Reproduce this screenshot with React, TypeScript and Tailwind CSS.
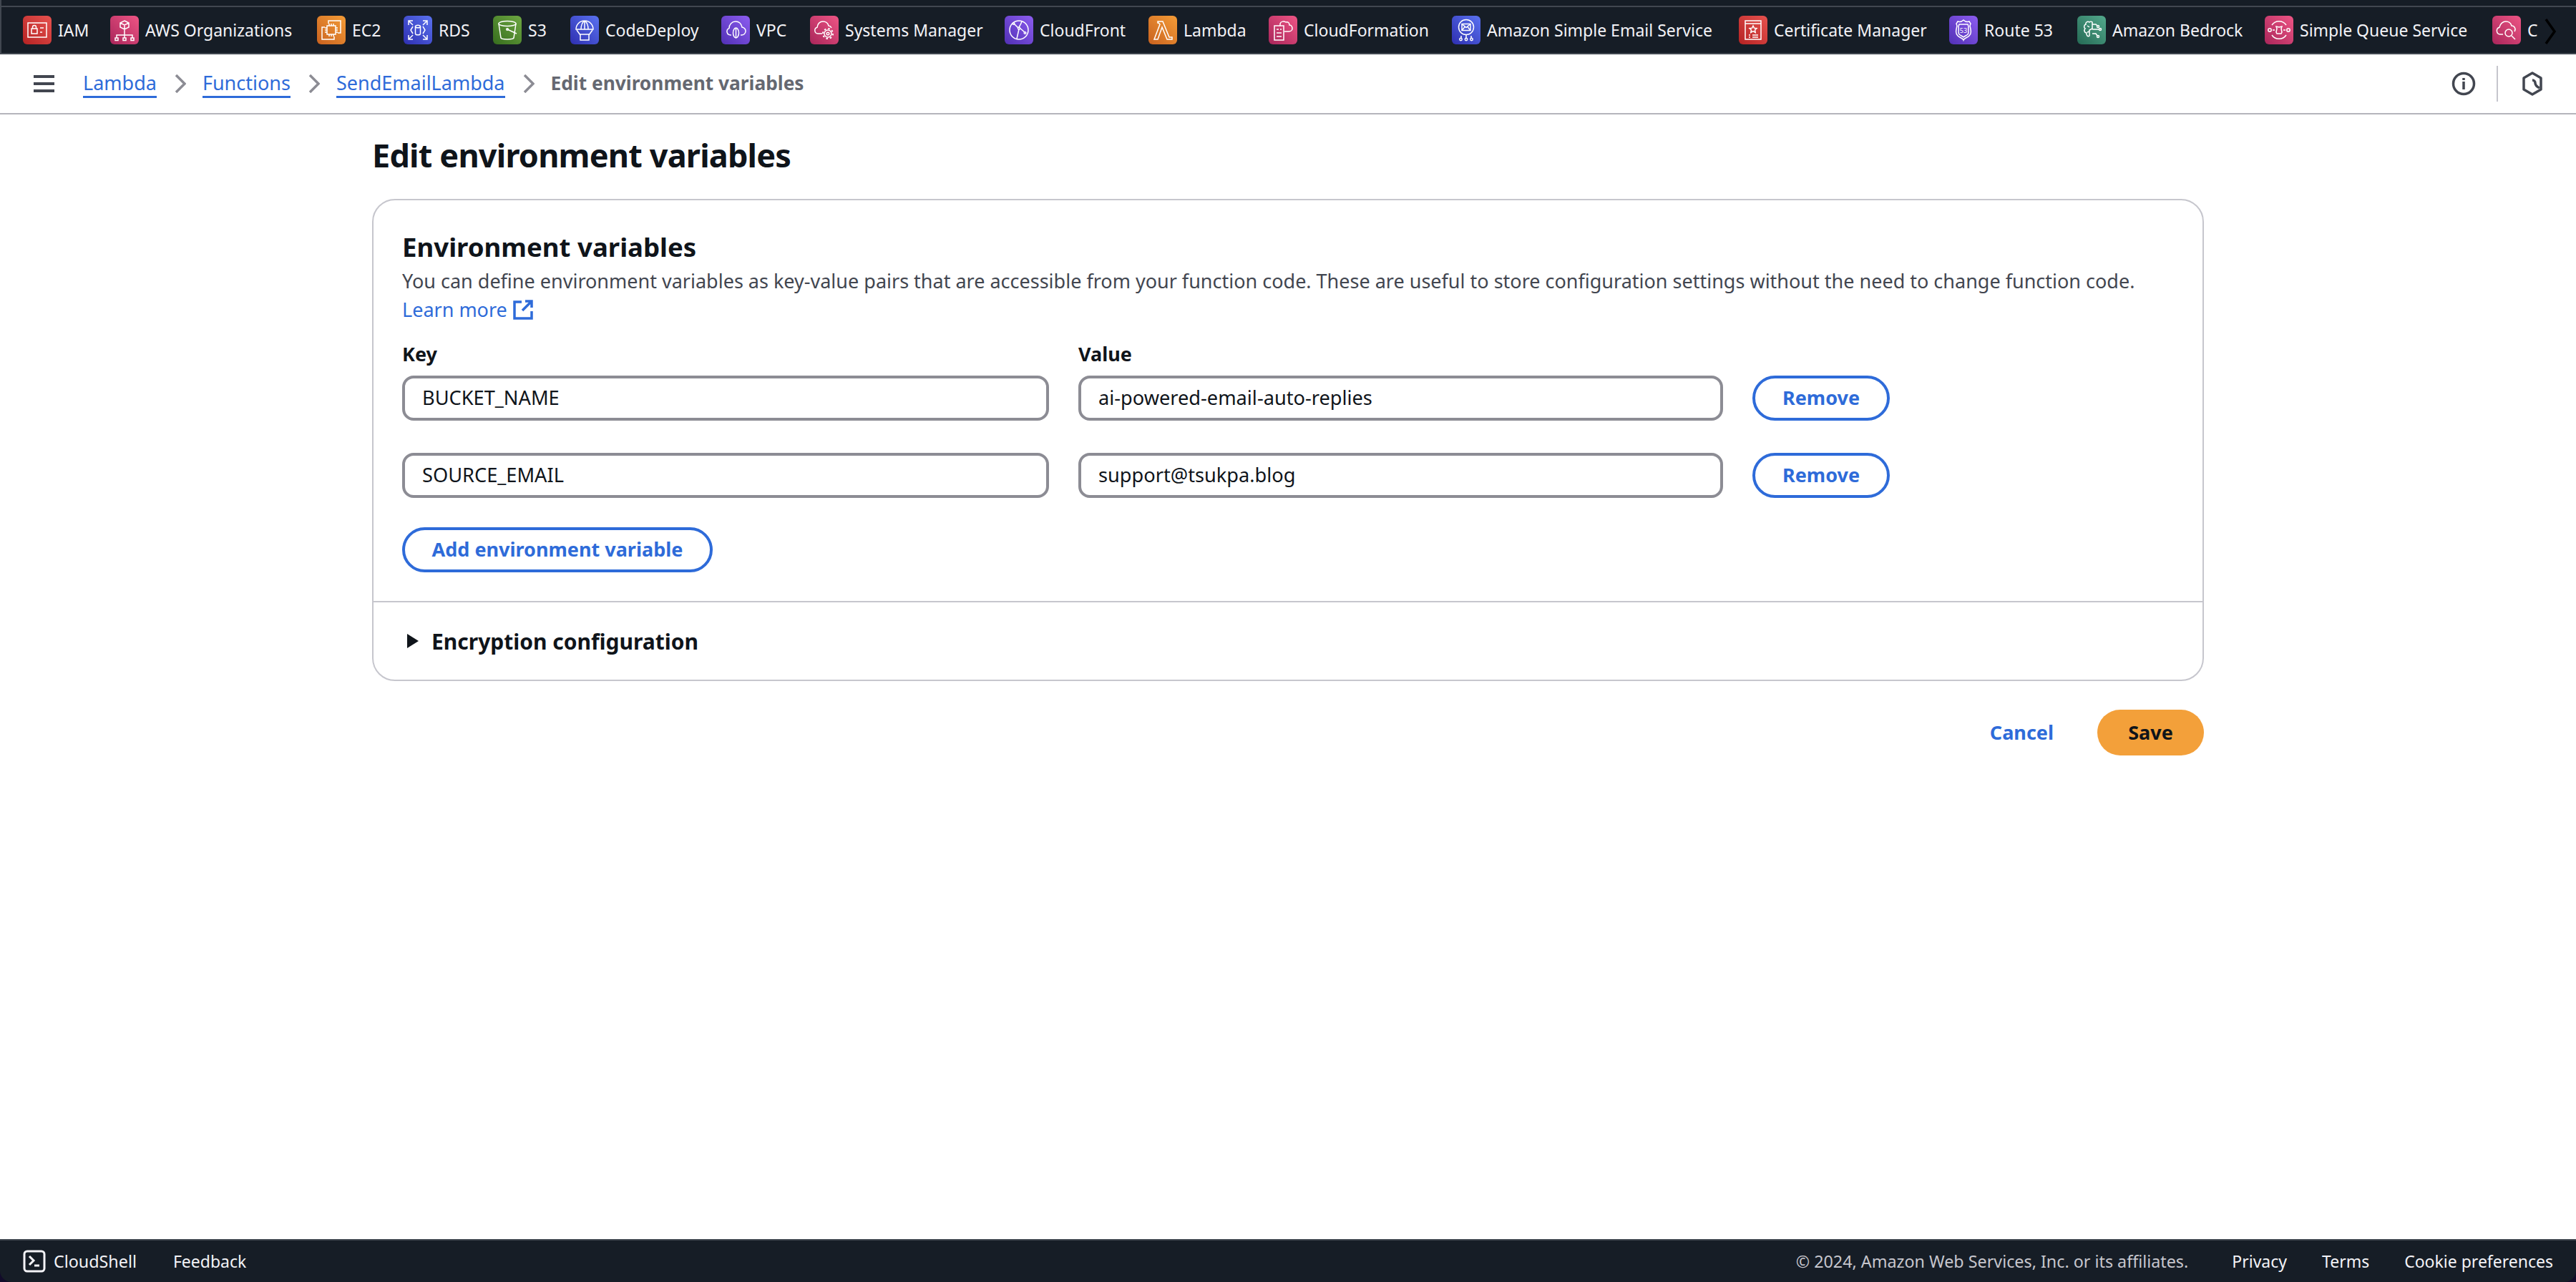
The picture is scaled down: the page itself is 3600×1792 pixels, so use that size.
import React from "react";

const font = "font-['Noto_Sans','Liberation_Sans',sans-serif]";

type Service = { name: string; step: number; from: string; to: string; icon: React.ReactNode };

const s = { fill: "none", stroke: "white", strokeWidth: 1.5 };

const services: Service[] = [
  { name: "IAM", step: 122, from: "#e7524f", to: "#b52323", icon: <g {...s}><rect x="7" y="10" width="26" height="20" /><rect x="12" y="18" width="8" height="7" /><path d="M13.5 18v-2a2.500 2.500 0 0 1 5 0v2M24 17h5M24 23h3" /></g> },
  { name: "AWS Organizations", step: 289, from: "#ee5585", to: "#a9265a", icon: <g {...s}><path d="M20 7l6 3v6l-6 3-6-3v-6zM14 10l6 3 6-3M20 13v6M20 19v7M9 31v-4h22v4M20 26v5" /><rect x="7" y="31" width="4" height="3.500" /><rect x="18" y="31" width="4" height="3.500" /><rect x="29" y="31" width="4" height="3.500" /></g> },
  { name: "EC2", step: 121, from: "#f49c37", to: "#c9621f", icon: <g {...s}><rect x="14" y="14" width="12" height="12" /><path d="M17 14v-3M20 14v-3M23 14v-3M17 29v-3M20 29v-3M23 29v-3M14 17h-3M14 20h-3M14 23h-3M26 17h3M26 20h3M26 23h3" /><path d="M16 11V7h17v17h-4M11 16H7v17h17v-4" /></g> },
  { name: "RDS", step: 125, from: "#5a72f0", to: "#2e2fb0", icon: <g {...s}><ellipse cx="20" cy="15" rx="3.500" ry="1.800" /><path d="M16.500 15v10c0 2.400 7 2.400 7 0V15M13 15l-3 5 3 5M27 15l3 5-3 5M7 13V7h6M33 13V7h-6M7 27v6h6M33 27v6h-6M8 8l5 5M32 8l-5 5M8 32l5-5M32 32l-5-5" /></g> },
  { name: "S3", step: 108, from: "#6ea842", to: "#376d1e", icon: <g {...s}><ellipse cx="20" cy="11" rx="12" ry="3.500" /><path d="M8 11l3 20c.5 2.500 17.500 2.500 18 0l3-20M20 19l13 6" /><circle cx="20" cy="19" r="1.300" /></g> },
  { name: "CodeDeploy", step: 211, from: "#5a72f0", to: "#2e2fb0", icon: <g {...s}><path d="M8 19a12 12 0 0 1 24 0zM15 19c0-6 2-10 5-12 3 2 5 6 5 12M20 7v12M9 20l5 7M31 20l-5 7" /><rect x="14" y="26" width="12" height="8" /></g> },
  { name: "VPC", step: 124, from: "#8d5df0", to: "#5130b5", icon: <g {...s}><path d="M14 27h-1a5 5 0 0 1-2-9.600C11 12 15 8 20 8s8 3.500 9 8a5.500 5.500 0 0 1-1 11h-1" /><ellipse cx="20.500" cy="24" rx="4" ry="7" /><path d="M20.500 17v14" /></g> },
  { name: "Systems Manager", step: 272, from: "#ee5585", to: "#a9265a", icon: <g {...s}><path d="M17 25h-6a4.500 4.500 0 0 1-1-8.800C10.500 11 14 8 18 8c4 0 7 2.500 8 6a5 5 0 0 1 4 3" /><circle cx="25" cy="25" r="5" /><circle cx="25" cy="25" r="7" strokeWidth="2" strokeDasharray="2.500 3" /><circle cx="25" cy="25" r="1.800" /></g> },
  { name: "CloudFront", step: 201, from: "#8d5df0", to: "#5130b5", icon: <g {...s}><circle cx="20" cy="20" r="13" /><path d="M13 11l6 6M21 17l7 6M24 8c-1 3-2 5-4 8M20 19l-3 13" /><circle cx="20" cy="17.500" r="1.500" /><circle cx="28.500" cy="24" r="1.300" /><circle cx="12.500" cy="11" r="1.300" /></g> },
  { name: "Lambda", step: 168, from: "#f49c37", to: "#c9621f", icon: <g {...s}><path d="M13 8h7l9 22h4v3h-7l-7-17-6 17H8l8-21-2-2h-1z" /></g> },
  { name: "CloudFormation", step: 256, from: "#ee5585", to: "#a9265a", icon: <g {...s}><rect x="8" y="14" width="13" height="20" /><path d="M11 19h3M16 19h2M11 24h7M11 29h7M16 14v-3c1-3 5-4 8-2 3-1 5 1 5 4 3 0 4 3 4 5s-2 4-5 4h-6" /></g> },
  { name: "Amazon Simple Email Service", step: 401, from: "#5a72f0", to: "#2e2fb0", icon: <g {...s}><circle cx="20" cy="16" r="10.500" /><rect x="14" y="11.500" width="12" height="9" /><path d="M14 11.500l6 5 6-5M14 20.500l4.500-5.500M26 20.500l-4.500-5.500M13 28v3M20 27v4M27 28v3" /><circle cx="12.500" cy="33" r="1.700" /><circle cx="20" cy="33" r="1.700" /><circle cx="27.500" cy="33" r="1.700" /></g> },
  { name: "Certificate Manager", step: 294, from: "#e7524f", to: "#b52323", icon: <g {...s}><path d="M9 7h22v26H9zM9 11h22M20 14l1.500 3.200 3.500.4-2.500 2.400.7 3.500-3.200-1.800-3.200 1.800.7-3.500-2.500-2.400 3.500-.4zM14 27h2M19 27h8M14 30h2M19 30h8" /></g> },
  { name: "Route 53", step: 179, from: "#8d5df0", to: "#5130b5", icon: <g {...s}><path d="M12 8c3 1 6 0 8-2 2 2 5 3 8 2l2 3-1 3c1 5 3 10-1 14-3 3-7 3-8 6-1-3-5-3-8-6-4-4-2-9-1-14l-1-3z" /><path d="M14 12h12l1 3c-1 4 1 9-1 11-2 2-4 2-6 4-2-2-4-2-6-4-2-2 0-7-1-11z" /><text x="20" y="24" textAnchor="middle" fontSize="9" fill="white" stroke="none">53</text></g> },
  { name: "Amazon Bedrock", step: 262, from: "#53a88c", to: "#256a55", icon: <g {...s}><path d="M17 9c-3-2-6 1-5 3-3 1-3 5-1 6-2 2-1 6 2 6-1 3 2 6 4 4v-8l4-2V9c-1-1-3-1-4 0zM21 12h5l2 2M21 19h9M21 25h5l2 3M17 16l-3-2M17 22l-3 1" /><circle cx="29" cy="15" r="1.500" /><circle cx="32" cy="19" r="1.500" /><circle cx="29" cy="29" r="1.500" /></g> },
  { name: "Simple Queue Service", step: 318, from: "#ee5585", to: "#a9265a", icon: <g {...s}><path d="M10 13a12 12 0 0 1 20 0M10 27a12 12 0 0 0 20 0" /><circle cx="7" cy="20" r="2.200" /><circle cx="33" cy="20" r="2.200" /><path d="M16 15l1 3-1 5 1 2h6l1-2-1-5 1-3-4 1zM11 20h3M26 20h3" /></g> },
];

function ServiceIcon({ from, to, children }: { from: string; to: string; children: React.ReactNode }) {
  return (
    <svg width="40" height="40" viewBox="0 0 40 40" className="shrink-0 rounded-[6px]" style={{ background: `linear-gradient(45deg, ${to}, ${from})` }}>
      {children}
    </svg>
  );
}

function Breadcrumb({ label }: { label: string }) {
  return (
    <>
      <a className="text-[#2e6bd9] text-[27px] leading-[36px] border-b-[3px] border-[#2e6bd9]">{label}</a>
      <svg width="16" height="26" viewBox="0 0 16 26" className="ml-[25px] mr-[23px] shrink-0">
        <path d="M2 1l12 12L2 25" fill="none" stroke="#8c8c94" strokeWidth="3.500" />
      </svg>
    </>
  );
}

function TextField({ value, width }: { value: string; width: string }) {
  return (
    <div className={`${width} h-[63px] border-4 border-[#8c8c94] rounded-[16px] flex items-center pl-[24px] text-[27.2px] text-[#0f141a] shrink-0`}>
      {value}
    </div>
  );
}

function OutlineButton({ label, className }: { label: string; className: string }) {
  return (
    <button className={`${className} h-[63px] rounded-full border-4 border-[#2e6bd9] text-[#2e6bd9] font-bold text-[27px] flex items-center justify-center shrink-0`}>
      {label}
    </button>
  );
}

function EnvRow({ k, v }: { k: string; v: string }) {
  return (
    <div className="flex gap-[41px]">
      <TextField value={k} width="w-[904px]" />
      <TextField value={v} width="w-[901px]" />
      <OutlineButton label="Remove" className="w-[192px]" />
    </div>
  );
}

export default function App() {
  return (
    <div className={`${font} w-[3600px] h-[1792px] bg-white flex flex-col overflow-hidden text-[#0f141a]`}>
      {/* favorites bar */}
      <div className="h-[76px] shrink-0 bg-[#161d26] relative border-l-2 border-[#414750]">
        <div className="h-[10px] border-b-2 border-[#414750]" />
        <div className="h-[66px] border-b-2 border-[#414750] pl-[30px] flex items-center overflow-hidden whitespace-nowrap text-[23px] text-[#f3f3f7]">
          {services.map((item) => (
            <div key={item.name} className="flex items-center gap-[9px] shrink-0" style={{ width: item.step }}>
              <ServiceIcon from={item.from} to={item.to}>{item.icon}</ServiceIcon>
              {item.name}
            </div>
          ))}
          <div className="flex items-center gap-[9px] shrink-0">
            <ServiceIcon from="#ee5585" to="#a9265a">
              <g {...s}><path d="M15 26h-4a5 5 0 0 1-1-9.800C11 11 15 8 19 8c4 0 7 2.500 8 6a5 5 0 0 1 4 8" /><circle cx="23" cy="24" r="5" /><path d="M27 28l5 5" /></g>
            </ServiceIcon>
            <span>C</span>
          </div>
        </div>
        <svg width="18" height="36" viewBox="0 0 18 36" className="absolute right-[26px] top-[26px]">
          <path d="M2 1l12 17L2 35" fill="none" stroke="#000" strokeWidth="3.500" />
        </svg>
      </div>

      {/* breadcrumbs */}
      <div className="h-[84px] shrink-0 border-b-2 border-[#b4b4bb] flex items-center pl-[47px] pr-[46px]">
        <div className="w-[29px] h-[24px] flex flex-col justify-between mr-[40px]">
          <div className="h-[4px] bg-[#424650]" />
          <div className="h-[4px] bg-[#424650]" />
          <div className="h-[4px] bg-[#424650]" />
        </div>
        <Breadcrumb label="Lambda" />
        <Breadcrumb label="Functions" />
        <Breadcrumb label="SendEmailLambda" />
        <span className="text-[26.3px] font-bold text-[#656871]">Edit environment variables</span>
        <div className="ml-auto flex items-center">
          <svg width="34" height="34" viewBox="0 0 34 34">
            <circle cx="17" cy="17" r="14.500" fill="none" stroke="#424650" strokeWidth="3.500" />
            <path d="M17 14v11M17 9v3" stroke="#424650" strokeWidth="3.500" />
          </svg>
          <div className="w-[2px] h-[50px] bg-[#c6c6cd] ml-[29px] mr-[33px]" />
          <svg width="30" height="34" viewBox="0 0 30 34">
            <path d="M15 2l12 7v16l-12 7-12-7V9z" fill="none" stroke="#424650" strokeWidth="3.500" strokeLinejoin="round" />
            <path d="M15 12a4 4 0 0 1 4 4c0 3 2 5 6 7" fill="none" stroke="#424650" strokeWidth="3.500" />
          </svg>
        </div>
      </div>

      {/* main */}
      <main className="flex-1 w-[2560px] ml-[520px]">
        <h1 className="text-[45px] leading-[60px] font-bold mt-[27px] tracking-[-0.8px]">Edit environment variables</h1>
        <section className="mt-[31px] w-[2560px] h-[674px] border-2 border-[#c6c6cd] rounded-[32px] flex flex-col">
          <div className="h-[562px] shrink-0 border-b-2 border-[#c6c6cd] px-[40px] pt-[41px]">
            <h2 className="text-[36.6px] leading-[48px] font-bold mb-[4px]">Environment variables</h2>
            <p className="text-[27px] leading-[40px] text-[#424650]">
              You can define environment variables as key-value pairs that are accessible from your function code. These are useful to store configuration settings without the need to change function code.
            </p>
            <a className="text-[27px] leading-[40px] text-[#2e6bd9] flex items-center gap-[8px]">
              Learn more
              <svg width="28" height="28" viewBox="0 0 28 28">
                <path d="M12 3H2v23h24V16M17 2h9v9M26 2L13 15" fill="none" stroke="#2e6bd9" strokeWidth="3.500" />
              </svg>
            </a>
            <div className="flex gap-[41px] mt-[23px] mb-[11px] text-[27px] leading-[38px] font-bold">
              <span className="w-[904px]">Key</span>
              <span>Value</span>
            </div>
            <div className="flex flex-col gap-[45px]">
              <EnvRow k="BUCKET_NAME" v="ai-powered-email-auto-replies" />
              <EnvRow k="SOURCE_EMAIL" v="support@tsukpa.blog" />
            </div>
            <OutlineButton label="Add environment variable" className="w-[434px] mt-[41px]" />
          </div>
          <div className="flex-1 flex items-center px-[46px] gap-[17px]">
            <svg width="18" height="20" viewBox="0 0 18 20"><path d="M1 0l16 10L1 20z" fill="#0f141a" /></svg>
            <span className="text-[30px] font-bold">Encryption configuration</span>
          </div>
        </section>
        <div className="flex items-center justify-end mt-[40px]">
          <a className="text-[27px] font-bold text-[#2e6bd9] mr-[61px]">Cancel</a>
          <button className="w-[149px] h-[64px] rounded-full bg-[#f3a03a] text-[27px] font-bold text-[#0f141a]">Save</button>
        </div>
      </main>

      {/* footer */}
      <div className="h-[60px] shrink-0 bg-[#120b2a]">
        <footer className="h-[60px] bg-[#161d26] border-t-2 border-[#414750] rounded-b-[16px] flex items-center px-[32px] text-[23px] text-[#f3f3f7]">
          <svg width="32" height="32" viewBox="0 0 32 32" className="mr-[11px]">
            <rect x="2" y="2" width="28" height="28" rx="4" fill="none" stroke="#f3f3f7" strokeWidth="3" />
            <path d="M9 9l6 6-6 6M16 22h7" fill="none" stroke="#f3f3f7" strokeWidth="3" />
          </svg>
          <span className="text-[23.3px]">CloudShell</span>
          <span className="ml-[51px]">Feedback</span>
          <span className="ml-auto text-[23.3px] text-[#c6c6cd]">© 2024, Amazon Web Services, Inc. or its affiliates.</span>
          <span className="ml-[61px]">Privacy</span>
          <span className="ml-[49px]">Terms</span>
          <span className="ml-[49px]">Cookie preferences</span>
        </footer>
      </div>
    </div>
  );
}
